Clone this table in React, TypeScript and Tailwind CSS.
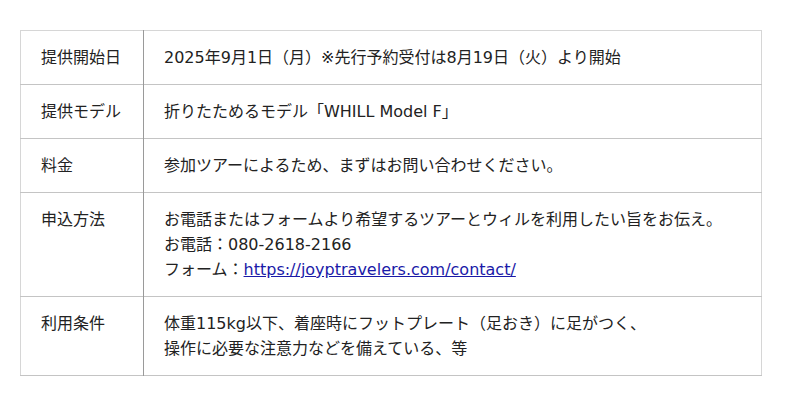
import React from "react";

const rows: { label: string; lines: React.ReactNode[] }[] = [
  {
    label: "提供開始日",
    lines: ["2025年9月1日（月）※先行予約受付は8月19日（火）より開始"],
  },
  {
    label: "提供モデル",
    lines: ["折りたためるモデル「WHILL Model F」"],
  },
  {
    label: "料金",
    lines: ["参加ツアーによるため、まずはお問い合わせください。"],
  },
  {
    label: "申込方法",
    lines: [
      "お電話またはフォームより希望するツアーとウィルを利用したい旨をお伝え。",
      "お電話：080-2618-2166",
      <>
        フォーム：
        <a href="#" className="text-[#1a1aa8] underline">
          https://joyptravelers.com/contact/
        </a>
      </>,
    ],
  },
  {
    label: "利用条件",
    lines: [
      "体重115kg以下、着座時にフットプレート（足おき）に足がつく、",
      "操作に必要な注意力などを備えている、等",
    ],
  },
];

const App = () => {
  return (
    <div
      className="w-[800px] h-[406px] bg-white pt-[30px] px-[20px] text-[#222] text-[16px] leading-[25px]"
      style={{ fontFamily: '"DejaVu Sans", "Noto Sans CJK JP", sans-serif' }}
    >
      <table className="w-[742px] border-collapse border border-[#d6d6d6]">
        <tbody>
          {rows.map((row) => (
            <tr key={row.label} className="border-b border-[#c4c4c4] align-top">
              <td className="w-[123px] px-[20px] py-[14px] border-r border-[#9a9a9a]">
                {row.label}
              </td>
              <td className="px-[20px] py-[14px]">
                {row.lines.map((line, i) => (
                  <div key={i}>{line}</div>
                ))}
              </td>
            </tr>
          ))}
        </tbody>
      </table>
    </div>
  );
};

export default App;
